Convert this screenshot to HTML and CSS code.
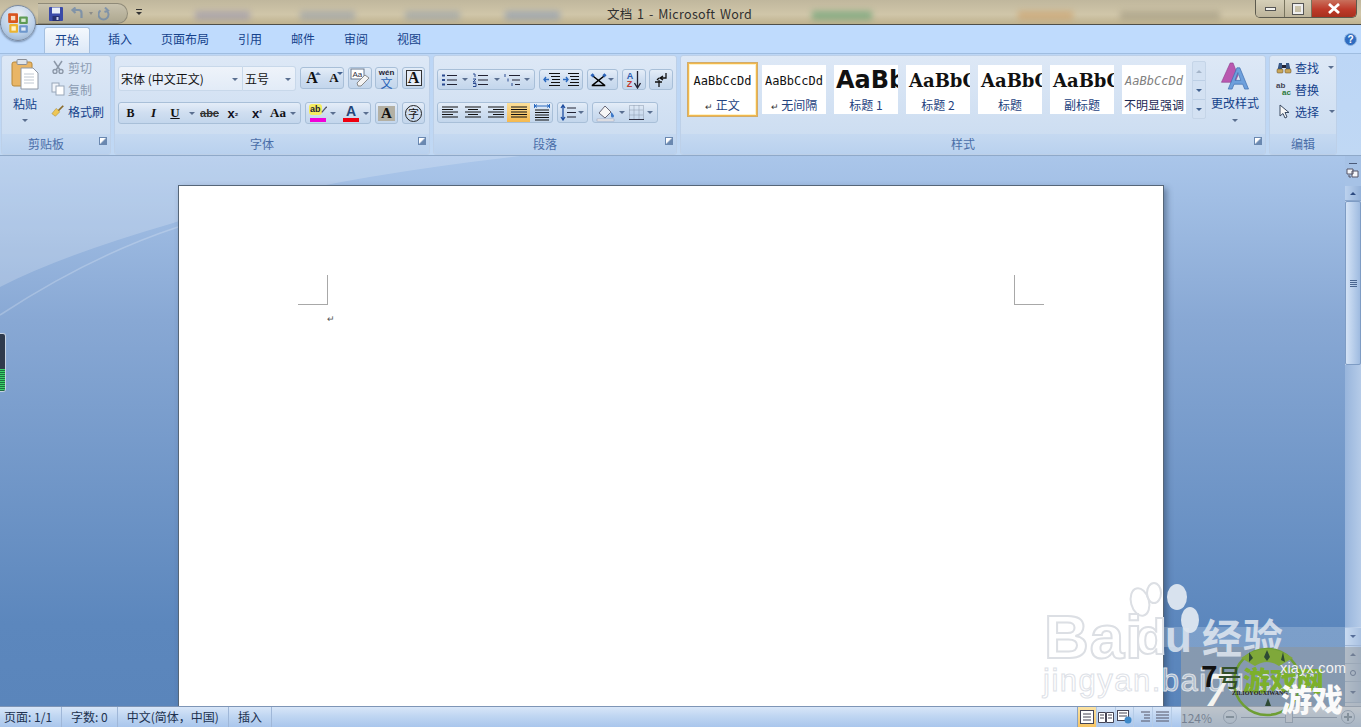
FILE: index.html
```html
<!DOCTYPE html>
<html lang="zh-CN">
<head>
<meta charset="utf-8">
<title>文档 1 - Microsoft Word</title>
<link rel="stylesheet" href="styles.css">
</head>
<body>
<div class="app">
  <header class="titlebar">
    <div class="blurs">
      <i class="blob b1"></i><i class="blob b2"></i><i class="blob b3"></i><i class="blob b4"></i><i class="blob b5"></i><i class="blob b6"></i><i class="blob b7"></i>
    </div>
    <div class="qat">
      <svg width="16" height="16" viewBox="0 0 16 16"><rect x="1" y="1" width="14" height="14" rx="1" fill="#3a4aa8"/><rect x="4" y="1.5" width="8" height="6" fill="#e8eef8"/><rect x="4.5" y="10" width="7" height="5" fill="#27306e"/><rect x="8.5" y="11" width="2" height="3" fill="#c8d0ea"/></svg>
      <svg class="dim" width="14" height="14" viewBox="0 0 14 14"><path d="M11.5 11V6a3 3 0 0 0-3-3H3M5.500 .5 2.500 3l3 3" fill="none" stroke="#6d88aa" stroke-width="2.200"/></svg>
      <span class="qat-arrow"></span>
      <svg class="dim" width="14" height="14" viewBox="0 0 14 14"><path d="M2.500 3.500a5 5 0 1 0 6 0M7 .5 10 3.500 6.500 5" fill="none" stroke="#6d88aa" stroke-width="2"/></svg>
    </div>
    <span class="qat-more"></span>
    <div class="title">文档 1 - Microsoft Word</div>
    <div class="winctl">
      <span class="wc wc-min"><i></i></span>
      <span class="wc wc-max"><i></i></span>
      <span class="wc wc-close">
        <svg width="14" height="11" viewBox="0 0 14 11"><path d="M2 1 12 10M12 1 2 10" stroke="#fff" stroke-width="2.800"/></svg>
      </span>
    </div>
  </header>

  <div class="office-btn">
    <svg width="22" height="24" viewBox="0 0 20 22">
      <rect x="1" y="2" width="9" height="9" rx="1" fill="#d9541e"/><rect x="3.500" y="4.500" width="4" height="4" fill="#f8dcc4"/>
      <rect x="11" y="5" width="8" height="7" rx="1" fill="#5f9b54"/><rect x="13" y="7" width="4" height="3" fill="#dcecd6"/>
      <rect x="2" y="12" width="8" height="8" rx="1" fill="#ecb430"/><rect x="4" y="14" width="4" height="4" fill="#fff3c8"/>
      <rect x="11" y="13" width="8" height="7" rx="1" fill="#6e97cc"/><rect x="13" y="15" width="4" height="3" fill="#e0ebf8"/>
    </svg>
  </div>

  <nav class="tabs">
    <span class="tab active">开始</span>
    <span class="tab first">插入</span>
    <span class="tab">页面布局</span>
    <span class="tab">引用</span>
    <span class="tab">邮件</span>
    <span class="tab">审阅</span>
    <span class="tab">视图</span>
    <span class="help">?</span>
  </nav>

  <section class="ribbon">
    <div class="group g-clip">
      <div class="body clip-body">
        <div class="paste">
          <svg width="28" height="31" viewBox="0 0 28 31">
            <rect x="1" y="3" width="20" height="24" rx="2" fill="#e9b565" stroke="#b88838"/>
            <rect x="6" y="0.500" width="10" height="5" rx="1" fill="#dfe4ea" stroke="#8a8f98"/>
            <path d="M10 9h12l5 5v16H10z" fill="#fff" stroke="#8f98a6"/>
            <path d="M13 15h10M13 18h10M13 21h10M13 24h10" stroke="#c0c8d2"/>
          </svg>
          <span class="paste-label">粘贴</span>
          <span class="caret paste-caret"></span>
        </div>
        <div class="clip-list">
          <div class="clip-row off">
            <svg width="14" height="14" viewBox="0 0 14 14"><path d="M3 1 9 10M11 1 5 10" stroke="#8c98a8" stroke-width="1.500"/><circle cx="4" cy="11.500" r="2" fill="none" stroke="#8c98a8" stroke-width="1.400"/><circle cx="10" cy="11.500" r="2" fill="none" stroke="#8c98a8" stroke-width="1.400"/></svg>
            <span>剪切</span>
          </div>
          <div class="clip-row off">
            <svg width="14" height="14" viewBox="0 0 14 14"><rect x="1" y="1" width="7" height="9" fill="#f0f4fa" stroke="#98a6b8"/><rect x="5" y="4" width="8" height="9" fill="#fff" stroke="#98a6b8"/></svg>
            <span>复制</span>
          </div>
          <div class="clip-row">
            <svg width="16" height="14" viewBox="0 0 16 14"><path d="M8 7 14 1" stroke="#8a6a2a" stroke-width="2"/><path d="M1 10 6 4l4 4-5 5z" fill="#eec655" stroke="#a88a30" stroke-width=".6"/></svg>
            <span>格式刷</span>
          </div>
        </div>
      </div>
      <div class="label pad">剪贴板<span class="launch"></span></div>
    </div>

    <div class="group g-font">
      <div class="body font-body">
        <div class="row font-row1">
          <span class="combo combo-font">宋体 (中文正文)<i class="caret"></i></span>
          <span class="combo combo-size">五号<i class="caret"></i></span>
          <span class="tb tb-grow">
            <b class="btn w22 serif big">A<i class="tri up"></i></b><b class="btn w22 serif mid">A<i class="tri down"></i></b>
          </span>
          <span class="tb single w24">
            <svg width="22" height="20" viewBox="0 0 22 20"><rect x="2" y="1" width="13" height="10" fill="#fff" stroke="#6a7a90"/><text x="3.500" y="9" font-size="8" font-family="Liberation Sans" fill="#334">Aa</text><path d="m8 15 8-8 4 3-8 8H9z" fill="#f4f4f4" stroke="#8a8a8a"/></svg>
          </span>
          <span class="tb single w23 wen"><em>wén</em><strong>文</strong></span>
          <span class="tb single w23 a-box"><b class="serif">A</b></span>
        </div>
        <div class="row font-row2">
          <span class="tb tb-format">
            <b class="btn w23 serif">B</b><i class="btn w23 serif it">I</i><b class="btn w20 serif un">U</b><span class="tcaret w13"></span><span class="btn w23 strike">abc</span><b class="btn w24 sub">x<small>₂</small></b><b class="btn w24 sub">x<small>²</small></b><b class="btn w18 serif aa">Aa</b><span class="tcaret w11"></span>
          </span>
          <span class="tb tb-colors">
            <span class="swatch"><em class="hl">ab</em><svg class="pen" width="8" height="9" viewBox="0 0 8 9"><path d="M1 8 7 1" stroke="#556" stroke-width="1.600"/></svg><i class="bar magenta"></i></span><span class="tcaret w12"></span>
            <span class="swatch s2"><b class="fc">A</b><i class="bar red"></i></span><span class="tcaret w12"></span>
          </span>
          <span class="tb single w23 shade"><b class="serif">A</b></span>
          <span class="tb single w23"><span class="zi">字</span></span>
        </div>
      </div>
      <div class="label pad">字体<span class="launch"></span></div>
    </div>

    <div class="group g-para">
      <div class="body para-body">
        <div class="row para-row1">
          <span class="tb w98 spread">
            <svg width="17" height="14" viewBox="0 0 17 14"><path d="M6 2.500h10M6 7h10M6 11.500h10" stroke="#223"/><path d="M1 2.500h3M1 7h3M1 11.500h3" stroke="#2b4a90" stroke-width="2"/></svg><span class="tcaret w10"></span>
            <svg width="17" height="14" viewBox="0 0 17 14"><path d="M6 2.500h10M6 7h10M6 11.500h10" stroke="#223"/><path d="M1 1h2v3M1 6h3l-3 3h3M1 10.500h3v3H1" fill="none" stroke="#2b4a90"/></svg><span class="tcaret w10"></span>
            <svg width="17" height="14" viewBox="0 0 17 14"><path d="M5 2.500h11M8 7h8M11 11.500h5" stroke="#223"/><path d="M1 1v3M4 5.500v3M8 10v3" stroke="#2b4a90"/></svg><span class="tcaret w8"></span>
          </span>
          <span class="tb w44 spread">
            <svg width="18" height="15" viewBox="0 0 18 15"><path d="M6 1.500h11M8 4.500h9M9 7.500h8M8 10.500h9M6 13.500h11" stroke="#111" stroke-width="1.200"/><path d="M6 7.500H1M3 5 1 7.500 3 10" fill="none" stroke="#2b6ac0" stroke-width="1.400"/></svg>
            <svg width="18" height="15" viewBox="0 0 18 15"><path d="M6 1.500h11M8 4.500h9M9 7.500h8M8 10.500h9M6 13.500h11" stroke="#111" stroke-width="1.200"/><path d="M1 7.500h5M4 5l2 2.500L4 10" fill="none" stroke="#2b6ac0" stroke-width="1.400"/></svg>
          </span>
          <span class="tb w31 spread">
            <svg width="20" height="16" viewBox="0 0 20 16"><path d="M3 3 17 14M17 3 3 14M2 14.500h16" fill="none" stroke="#000" stroke-width="1.700"/><path d="M3 0 5.500 2.500 3 5 .5 2.500zM17 0l2.500 2.500L17 5l-2.500-2.500z" fill="#2a62b8"/></svg><span class="tcaret w8"></span>
          </span>
          <span class="tb w24 az"><span class="az-l"><b class="az-a">A</b><b class="az-z">Z</b></span><svg width="7" height="18" viewBox="0 0 7 18"><path d="M3.500 0v16M.5 12l3 5 3-5" fill="none" stroke="#223" stroke-width="1.300"/></svg></span>
          <span class="tb w24 single">
            <svg width="14" height="16" viewBox="0 0 14 16"><path d="M12 1v5H7M9 4 6 6l3 2M1 10h7M5 8v7M3 8l2-2" fill="none" stroke="#111" stroke-width="1.300"/></svg>
          </span>
        </div>
        <div class="row para-row2">
          <span class="tb w116 aligns">
            <span class="btn w23"><svg width="16" height="13" viewBox="0 0 16 13"><path d="M0 1h16M0 3.500h11M0 6h16M0 8.500h11M0 11h16" stroke="#111"/></svg></span><span class="btn w23"><svg width="16" height="13" viewBox="0 0 16 13"><path d="M0 1h16M3 3.500h10M0 6h16M3 8.500h10M0 11h16" stroke="#111"/></svg></span><span class="btn w23"><svg width="16" height="13" viewBox="0 0 16 13"><path d="M0 1h16M5 3.500h11M0 6h16M5 8.500h11M0 11h16" stroke="#111"/></svg></span><span class="btn w23 on"><svg width="16" height="13" viewBox="0 0 16 13"><path d="M0 1h16M0 3.500h16M0 6h16M0 8.500h16M0 11h16" stroke="#111"/></svg></span><span class="btn w24"><svg width="16" height="17" viewBox="0 0 16 17"><path d="M1 6h14M1 8.500h14M1 11h14M1 13.500h14M1 16h14" stroke="#111"/><path d="M.5 0v4M15.500 0v4M1 2h14M3 .5 1 2l2 1.500M13 .5 15 2l-2 1.500" fill="none" stroke="#2b6ac0"/></svg></span>
          </span>
          <span class="tb w31 spread">
            <svg width="16" height="17" viewBox="0 0 16 17"><path d="M7 4h9M7 8.500h9M7 13h9" stroke="#223"/><path d="M3 1v15M1 4l2-3 2 3M1 13l2 3 2-3" fill="none" stroke="#1f4ea0" stroke-width="1.300"/></svg><span class="tcaret w8"></span>
          </span>
          <span class="tb w66 spread">
            <svg width="20" height="18" viewBox="0 0 20 18"><path d="m3 9 6-7 6 6-6 6z" fill="#f6f6f6" stroke="#667"/><path d="M15 8c2 2 3 3 3 4a1.500 1.500 0 0 1-3 0z" fill="#3d78c8"/><rect x="1" y="15" width="17" height="2" fill="#f4f4f4" stroke="#99a" stroke-width=".5"/></svg><span class="tcaret w8"></span>
            <svg width="15" height="15" viewBox="0 0 15 15"><path d="M.5.5h14v14H.5zM5 .5v14M10 .5v14M.5 5h14M.5 10h14" fill="none" stroke="#8a98ac" stroke-dasharray="1 1"/><path d="M0 14.500h15" stroke="#334"/></svg><span class="tcaret w8"></span>
          </span>
        </div>
      </div>
      <div class="label pad">段落<span class="launch"></span></div>
    </div>

    <div class="group g-styles">
      <div class="body styles-body">
        <div class="gallery">
          <div class="card sel"><span class="sample mono">AaBbCcDd</span><span class="cap"><i class="ret">↵</i> 正文</span></div>
          <div class="card"><span class="sample mono">AaBbCcDd</span><span class="cap"><i class="ret">↵</i> 无间隔</span></div>
          <div class="card"><span class="sample h1">AaBb</span><span class="cap">标题 1</span></div>
          <div class="card"><span class="sample h2">AaBbC</span><span class="cap">标题 2</span></div>
          <div class="card"><span class="sample h2">AaBbC</span><span class="cap">标题</span></div>
          <div class="card"><span class="sample h2">AaBbC</span><span class="cap">副标题</span></div>
          <div class="card"><span class="sample em">AaBbCcDd</span><span class="cap dark">不明显强调</span></div>
        </div>
        <div class="gal-scroll">
          <span class="gs"><i class="tri up gray"></i></span>
          <span class="gs"><i class="tri down blue"></i></span>
          <span class="gs gs-more"><i class="tri down blue"></i></span>
        </div>
        <div class="change">
          <svg width="30" height="29" viewBox="0 0 30 30">
            <path d="M1 21 10 1h3l5 13-3 7z" fill="#b958b0" stroke="#8a3a88" stroke-width=".6"/>
            <path d="M8 28 17 6h3l9 22h-4l-2-5h-9l-2 5zM15 19h6l-3-8z" fill="#6ea0dc" stroke="#3d6cae" stroke-width=".7"/>
          </svg>
          <span>更改样式</span>
          <i class="caret"></i>
        </div>
      </div>
      <div class="label pad">样式<span class="launch"></span></div>
    </div>

    <div class="group g-edit">
      <div class="body edit-body">
        <div class="edit-row">
          <svg width="16" height="14" viewBox="0 0 16 14"><path d="M1 12 3 3h3v9zM10 12V3h3l2 9z" fill="#3a5a88"/><rect x="1" y="9" width="6" height="4" rx="1" fill="#c9a75a" stroke="#604a20" stroke-width=".5"/><rect x="9" y="9" width="6" height="4" rx="1" fill="#c9a75a" stroke="#604a20" stroke-width=".5"/><rect x="6" y="5" width="4" height="3" fill="#223"/></svg>
          <span>查找</span><i class="caret"></i>
        </div>
        <div class="edit-row">
          <span class="abac"><em>ab</em><em class="ac">ac</em></span>
          <span>替换</span>
        </div>
        <div class="edit-row row3">
          <svg width="12" height="15" viewBox="0 0 12 15"><path d="M1 1v11l3-2.500 2 4.500 2-1-2-4.500h4z" fill="#f8f8f8" stroke="#3a4a60"/></svg>
          <span>选择</span><i class="caret"></i>
        </div>
      </div>
      <div class="label">编辑</div>
    </div>
  </section>

  <main class="workspace">
    <svg class="swoosh" width="1345" height="550" viewBox="0 0 1345 550" preserveAspectRatio="none">
      <path d="M0 0H520Q300 25 170 68 60 100 0 131z" fill="#fff" fill-opacity=".2"/>
      <path d="M0 159Q90 100 178 71" fill="none" stroke="#fff" stroke-opacity=".22" stroke-width="1.500"/>
    </svg>
    <div class="canvas">
      <div class="page">
        <div class="margins">
          <span class="corner left"></span>
          <span class="corner right"></span>
        </div>
        <div class="para-mark">↵</div>
      </div>
    </div>
    <aside class="vscroll">
      <span class="ruler-ico">
        <svg width="13" height="17" viewBox="0 0 13 17"><path d="M3 .5h8" stroke="#4a5a78"/><path d="M1 6h6v5H1zM6 8h6v6H6z" fill="#f4f6fa" stroke="#556"/><path d="M3 12v2h2" fill="none" stroke="#556"/></svg>
      </span>
      <span class="sb-btn"><i class="tri up navy"></i></span>
      <span class="thumb"><i class="grip"></i></span>
      <span class="sb-track"></span>
      <span class="sb-btn small"><i class="tri down navy"></i></span>
      <span class="sb-btn small"><i class="tri up navy"></i></span>
      <span class="sb-btn small"><i class="dot"></i></span>
      <span class="sb-btn small last"><i class="tri down navy"></i></span>
    </aside>
  </main>

  <footer class="status">
    <span class="st">页面: 1/1</span>
    <span class="st">字数: 0</span>
    <span class="st">中文(简体，中国)</span>
    <span class="st">插入</span>
    <span class="st-fill"></span>
    <div class="views">
      <span class="vw on"><svg width="14" height="14" viewBox="0 0 14 14"><rect x=".5" y=".5" width="13" height="13" fill="#fff" stroke="#445"/><path d="M3 4h8M3 7h8M3 10h8" stroke="#445"/></svg></span>
      <span class="vw"><svg width="16" height="13" viewBox="0 0 16 13"><path d="M.5 1.500h7v10h-7zM8.500 1.500h7v10h-7z" fill="#fff" stroke="#445"/><path d="M2 4h4M2 7h4M10 4h4M10 7h4" stroke="#445"/></svg></span>
      <span class="vw"><svg width="15" height="14" viewBox="0 0 15 14"><rect x=".5" y=".5" width="11" height="10" fill="#fff" stroke="#445"/><path d="M2 3h8M2 6h8" stroke="#445"/><circle cx="11" cy="10" r="3.500" fill="#3d88c8"/></svg></span>
      <span class="vw"><svg width="13" height="12" viewBox="0 0 13 12"><path d="M4 1h9M7 4h6M7 7h6M4 10h9" stroke="#556"/></svg></span>
      <span class="vw"><svg width="13" height="12" viewBox="0 0 13 12"><path d="M0 1h13M0 4h13M0 7h13M0 10h13" stroke="#556"/></svg></span>
    </div>
    <span class="zoomval">124%</span>
    <span class="zm"><i></i></span>
    <span class="zoomline"><i></i></span>
    <span class="zm plus"><i></i></span>
  </footer>

  <div class="left-gadget"><i></i></div>

  <div class="watermark">
    <span class="wm-lite"></span>
    <span class="wm-dark"></span>
    <svg class="paw" width="100" height="80" viewBox="0 0 100 80">
      <ellipse cx="14" cy="20" rx="9" ry="14" fill="none" stroke="#dcdfe4" stroke-width="2" transform="rotate(-15 14 20)"/>
      <ellipse cx="28" cy="11" rx="7" ry="10" fill="none" stroke="#dcdfe4" stroke-width="2"/>
      <ellipse cx="51" cy="15" rx="10" ry="13" fill="#d8e2ee"/>
      <ellipse cx="64" cy="38" rx="9" ry="13" fill="#d8e2ee"/>
    </svg>
    <span class="wm-bai">Bai</span>
    <span class="wm-d">d</span>
    <span class="wm-u">u</span>
    <span class="wm-jy">经验</span>
    <span class="wm-url">jingyan.baidu.com</span>
    <svg class="ring" width="76" height="76" viewBox="0 0 76 76"><circle cx="38" cy="38" r="33" fill="none" stroke="#6e9e34" stroke-width="2.500"/><path d="M12 14Q38-4 64 14L50 22Q38 14 26 22z" fill="#7fa83a"/><path d="M20 8l4 6-4 4zM38 6l3 7-3 4-3-4zM54 8l-2 8 4 2z" fill="#2e4a34"/><path d="M36 62l3-8 3 8z" fill="#2e4a34"/></svg>
    <span class="wm-green">游戏网</span>
    <span class="wm-7w">7</span>
    <span class="wm-7"><b>7</b>号</span>
    <span class="wm-xiayx">xiayx.com</span>
    <span class="wm-pin">ZILIOYOUXIWANG</span>
    <span class="wm-youxi">游戏</span>
  </div>
</div>
</body>
</html>
```
FILE: styles.css
```css
* { box-sizing: border-box; }
html, body { margin: 0; padding: 0; height: 100%; overflow: hidden; }
body { font-family: "Noto Sans CJK SC", "Liberation Sans", sans-serif; font-size: 12px; color: #15428b; }
i, em { font-style: normal; }

.app { position: relative; width: 1361px; height: 727px; display: flex; flex-direction: column; overflow: hidden; }

/* title bar */
.titlebar { position: relative; height: 25px; flex: none; display: flex; align-items: flex-start; overflow: hidden;
  background: linear-gradient(#c0b79d, #d0c6a9 60%, #bfb28f); border-bottom: 1px solid #4e4e48; padding-left: 38px; }
.blurs { position: absolute; inset: 0; filter: blur(3px); opacity: .55; }
.blob { position: absolute; top: 11px; height: 9px; }
.b1 { left: 195px; width: 55px; background: #8f8cac; }
.b2 { left: 300px; width: 55px; background: #8e98a8; }
.b3 { left: 405px; width: 55px; background: #8e9aa8; }
.b4 { left: 505px; width: 55px; background: #7e92b4; }
.b5 { left: 812px; width: 60px; background: #4f9868; }
.b6 { left: 1018px; width: 55px; background: #cc9a60; }
.b7 { left: 1120px; width: 100px; background: #99927a; }
.qat { position: relative; width: 90px; height: 21px; margin-top: 3px; border: 1px solid #8f8a78; border-left: 0; border-radius: 0 11px 11px 0;
  background: linear-gradient(#c8c2ae, #ada78f); display: flex; align-items: center; gap: 6px; padding-left: 10px; }
.dim { opacity: .75; }
.qat-arrow { width: 0; height: 0; border: 2px solid transparent; border-top: 3px solid #8c8c88; margin: 2px -1px 0 -1px; }
.qat-more { position: relative; width: 6px; height: 5px; margin: 9px 0 0 8px; border-top: 1px solid #333; }
.qat-more::after { content: ""; position: absolute; left: 0; top: 2px; border: 3px solid transparent; border-top: 3px solid #333; }
.title { position: absolute; left: -2px; right: 0; top: 5px; text-align: center; font-size: 12.5px; line-height: 17px; color: #2f2f2f; letter-spacing: .3px; word-spacing: 1.500px; font-family: "Noto Sans CJK SC", "Noto Sans", sans-serif; }
.winctl { position: absolute; right: 4px; top: 0; height: 18px; width: 102px; display: flex; border: 1px solid #5c5a4e; border-top: 0; border-radius: 0 0 5px 5px; overflow: hidden; }
.wc { display: flex; align-items: center; justify-content: center; height: 100%; background: linear-gradient(#d5cfb8, #bdb49b); border-right: 1px solid #78745f; }
.wc-min { width: 29px; } .wc-max { width: 27px; }
.wc-min i { width: 11px; height: 4px; background: #f2f2ee; border: 1px solid #555; }
.wc-max i { width: 10px; height: 10px; border: 2px solid #eee; outline: 1px solid #555; background: transparent; }
.wc-close { flex: 1; border: 0; background: linear-gradient(#c9705c, #be3a2a 55%, #a8301f); }

.office-btn { position: absolute; left: 0; top: 5px; width: 36px; height: 36px; border-radius: 50%; z-index: 4; display: flex; align-items: center; justify-content: center;
  background: radial-gradient(circle at 50% 30%, #eef0f2, #b8cee8 62%, #8aa4c2); border: 1px solid #7a8aa0; box-shadow: 0 1px 2px rgba(40,60,90,.5); }

/* tabs */
.tabs { position: relative; height: 28px; flex: none; display: flex; align-items: flex-end; padding-left: 44px; background: #bfdbfd; }
.tab { height: 26px; line-height: 23px; padding: 0 14.500px; color: #15428b; font-size: 12px; }
.tab.first { margin-left: 3.500px; }
.tab.active { width: 46px; padding: 0; text-align: center; background: linear-gradient(#f4f8fd, #dce8f7); border: 1px solid #a5c0e0; border-bottom: 0; border-radius: 3px 3px 0 0; }
.help { position: absolute; right: 4px; top: 8px; width: 13px; height: 13px; border-radius: 50%; background: #2f6cc0; border: 1px solid #8fb3de; color: #fff; font: bold 10px/11px "Liberation Sans", sans-serif; text-align: center; }

/* ribbon */
.ribbon { height: 103px; flex: none; display: flex; padding: 2px 0 0 1px; background: linear-gradient(#bcd6f6, #c0d8f4); border-top: 1px solid #9fbde0; border-bottom: 1px solid #8fa9c9; }
.group { flex: none; display: flex; flex-direction: column; height: 100px; margin-top: -1px; border: 1px solid #bdd0e8; border-radius: 3px; background: linear-gradient(#dde8f6, #c9dbf0); overflow: hidden; }
.g-clip { width: 110px; margin-right: 3px; }
.g-font { width: 316px; margin-right: 3px; }
.g-para { width: 244px; margin-right: 3px; }
.g-styles { width: 586px; margin-right: 3px; }
.g-edit { width: 68px; }
.body { flex: 1; min-height: 0; position: relative; }
.label { position: relative; height: 20px; flex: none; text-align: center; line-height: 20px; color: #4a6ea8; background: linear-gradient(#c5d9f1, #b9d1ee); font-size: 12px; }
.label.pad { padding-right: 20px; }
.launch { position: absolute; right: 3px; top: 3px; width: 8px; height: 8px; border: 1px solid #6a88b0; background: linear-gradient(135deg, #fff 40%, #6a88b0 60%); }
.caret { display: inline-block; width: 0; height: 0; border: 3px solid transparent; border-top: 3px solid #5a6f90; border-bottom: 0; }

/* clipboard */
.clip-body { display: flex; padding: 3px 0 0 9px; }
.paste { width: 28px; display: flex; flex-direction: column; align-items: center; }
.paste-label { margin-top: 5px; color: #15428b; line-height: 18px; }
.paste-caret { margin-top: 6px; }
.clip-list { margin: -2px 0 0 12px; display: flex; flex-direction: column; gap: 2px; }
.clip-row { height: 20px; display: flex; align-items: center; gap: 3px; width: 56px; white-space: nowrap; }
.clip-row svg { flex: none; width: 14px; }
.clip-row.off { color: #8c9cb2; }

/* toolbars */
.row { display: flex; }
.tb { height: 21px; display: inline-flex; align-items: center; border: 1px solid #a8bfd8; border-radius: 3px; background: linear-gradient(#e4edf8, #cfdef0 50%, #c3d6ec); color: #111; flex: none; }
.btn { display: inline-flex; align-items: center; justify-content: center; height: 100%; flex: none; font-weight: inherit; }
.single { justify-content: center; }
.spread { justify-content: space-around; padding: 0 2px; }
.serif { font-family: "Liberation Serif", serif; font-weight: 700; }
.w8 { width: 8px; } .w10 { width: 10px; } .w11 { width: 11px; } .w12 { width: 12px; } .w13 { width: 13px; }
.w18 { width: 18px; } .w20 { width: 20px; } .w22 { width: 22px; } .w23 { width: 23px; } .w24 { width: 24px; }
.w31 { width: 31px; } .w44 { width: 44px; } .w66 { width: 66px; } .w98 { width: 98px; } .w116 { width: 116px; }
.tcaret { display: inline-flex; align-items: center; justify-content: center; height: 100%; flex: none; }
.tcaret::after { content: ""; border: 3px solid transparent; border-top: 3px solid #5a6f90; border-bottom: 0; }
.tri { display: inline-block; width: 0; height: 0; border: 3px solid transparent; }
.tri.up { border-top: 0; border-bottom: 3px solid #41618f; }
.tri.down { border-bottom: 0; border-top: 3px solid #41618f; }

/* font group */
.font-body { padding: 10px 0 0 3px; }
.font-row1 { height: 26px; align-items: flex-start; }
.font-row1 .tb { height: 22px; margin-top: 1px; }
.combo { height: 25px; display: flex; align-items: center; position: relative; color: #111; background: linear-gradient(#eef3fa, #e2ebf7); border: 1px solid #c8d8ea; flex: none; }
.combo-font { width: 125px; padding-left: 2px; border-radius: 3px 0 0 3px; }
.combo-size { width: 53px; padding-left: 2px; border-left: 0; border-radius: 0 3px 3px 0; margin-right: 4px; }
.combo .caret { position: absolute; right: 4px; top: 11px; }
.tb-grow { width: 44px; margin-right: 4px; }
.big { font-size: 16px; line-height: 1; position: relative; }
.mid { font-size: 13px; position: relative; }
.btn .tri { position: absolute; right: 2px; top: 4px; }
.font-row1 .w24 { margin-right: 3px; }
.font-row1 .wen { margin-right: 4px; }
.wen { position: relative; flex-direction: column; line-height: 1; }
.wen em { font: 700 8px/8px "Liberation Sans", sans-serif; color: #223; }
.wen strong { font-size: 12px; line-height: 11px; color: #2a64b8; font-weight: 400; }
.a-box b { font-size: 16px; border: 1px solid #333; width: 16px; height: 16px; line-height: 14px; text-align: center; background: #e6edf7; }
.font-row2 { margin-top: 10px; height: 22px; }
.font-row2 .tb { height: 22px; }
.tb-format { width: 183px; margin-right: 4px; }
.it { font-size: 13px; font-style: italic; }
.un { text-decoration: underline; font-size: 13px; }
.strike { text-decoration: line-through; font: 700 11px "Liberation Sans", sans-serif; color: #333; }
.sub { font: 700 13px "Liberation Sans", sans-serif; color: #112; }
.sub small { font-size: 8px; }
.aa { font-size: 13px; }
.tb-colors { width: 66px; margin-right: 4px; padding-left: 3px; }
.swatch { position: relative; width: 18px; height: 18px; display: flex; flex: none; }
.swatch.s2 { margin-left: 3px; justify-content: center; }
.hl { font: 700 9px/11px "Liberation Sans", sans-serif; background: #f4ec60; padding: 0 1px; height: 11px; color: #223; border-radius: 3px; }
.pen { margin: 1px 0 0 -1px; }
.fc { font: 700 14px/14px "Liberation Sans", sans-serif; color: #24467a; }
.bar { position: absolute; left: 1px; right: 1px; bottom: 0; height: 4px; }
.magenta { background: #f000d8; }
.red { background: #ef0010; }
.font-row2 .shade { margin-right: 4px; }
.shade b { font-size: 15px; padding: 0 3px; background: #b3b0a4; line-height: 15px; }
.zi { width: 17px; height: 17px; border-radius: 50%; border: 1px solid #222; font-size: 11px; line-height: 15px; text-align: center; color: #111; }

/* paragraph */
.para-body { padding: 13px 0 0 3px; }
.para-row1 { gap: 4px; }
.para-row1 .w24 { width: 24px; }
.para-row1 .w24.single { margin-left: -1px; }
.para-row2 { gap: 4px; margin-top: 12px; }
.aligns { overflow: hidden; }
.on { background: linear-gradient(#fbdf9a, #f5b94f); }
.az { justify-content: center; gap: 1px; }
.az-l { display: flex; flex-direction: column; font: 700 9px/8px "Liberation Sans", sans-serif; }
.az-a { color: #2a5cb0; } .az-z { color: #c03a30; }

/* styles */
.styles-body { display: flex; padding: 6px 0 0 3px; }
.gallery { display: flex; padding: 3px 0 0 3px; height: 52px; width: 508px; flex: none; gap: 8px; align-items: flex-start; }
.card { width: 64px; height: 49px; background: #fff; display: flex; flex-direction: column; align-items: center; overflow: hidden; flex: none; }
.card.sel { width: 71px; height: 55px; margin: -3px -4px 0 0; border: 2px solid #f2b74c; box-shadow: inset 0 0 0 1px #fdf2c8; outline: 1px solid #d1ac6a; outline-offset: -1px; padding-top: 1px; }
.sample { height: 30px; line-height: 32px; width: 100%; text-align: center; white-space: nowrap; color: #111; overflow: hidden; flex: none; }
.mono { font: 12px/32px "DejaVu Sans Mono", monospace; }
.h1 { font: 700 24px/30px "DejaVu Sans", sans-serif; text-align: left; padding-left: 2px; }
.h2 { font: 700 18px/32px "DejaVu Serif", serif; text-align: left; padding-left: 3px; }
.em { font: italic 12px/32px "DejaVu Sans Mono", monospace; color: #808080; }
.cap { line-height: 20px; color: #24427e; font-size: 12px; white-space: nowrap; flex: none; }
.cap.dark { color: #1d2a54; }
.ret { font-size: 9px; color: #333; }
.gal-scroll { width: 14px; height: 58px; display: flex; flex-direction: column; flex: none; border: 1px solid #c5d5e8; border-radius: 2px; background: #d3e1f2; position: relative; top: -1px; }
.gs { flex: 1; display: flex; align-items: center; justify-content: center; border-bottom: 1px solid #bccfe5; }
.gs-more { border-bottom: 0; }
.gray.up { border-bottom-color: #a5b5c9; }
.change { width: 54px; margin-left: 2px; display: flex; flex-direction: column; align-items: center; }
.change span { color: #15428b; line-height: 18px; margin-top: 3px; white-space: nowrap; }
.change .caret { margin-top: 7px; }

/* edit */
.edit-body { padding: 1px 0 0 6px; display: flex; flex-direction: column; gap: 2px; }
.edit-row { height: 20px; display: flex; align-items: center; gap: 3px; white-space: nowrap; }
.edit-row svg { flex: none; }
.edit-row .caret { margin-left: 6px; }
.row3 { padding-left: 3px; gap: 4px; }
.abac { width: 16px; font: 700 8px/7px "Liberation Sans", sans-serif; display: flex; flex-direction: column; color: #445; }
.abac .ac { color: #2c7a3a; padding-left: 6px; }

/* workspace */
.workspace { position: relative; flex: 1; min-height: 0; display: flex; overflow: hidden; background: linear-gradient(#aac6ea, #88a8d4 30%, #5c87bd 85%, #5a85bb); }
.swoosh { position: absolute; left: 0; top: 0; }
.canvas { position: relative; flex: 1; padding: 29px 0 0 178px; overflow: hidden; }
.page { position: relative; width: 986px; height: 540px; background: #fff; border: 1px solid #566678; box-shadow: 3px 3px 6px rgba(35,55,85,.45); }
.margins { display: flex; justify-content: space-between; padding: 89px 119px 0 119px; }
.corner { width: 30px; height: 30px; border-bottom: 1px solid #a8a8a8; }
.corner.left { border-right: 1px solid #a8a8a8; }
.corner.right { border-left: 1px solid #a8a8a8; }
.para-mark { font-size: 9px; line-height: 12px; color: #555; padding-left: 148px; margin-top: 8px; }
.vscroll { position: relative; width: 16px; flex: none; display: flex; flex-direction: column; background: linear-gradient(90deg, #c3d4ec, #b0c6e4); }
.ruler-ico { height: 30px; flex: none; padding: 7px 0 0 1px; background: #a6c2e6; }
.sb-btn { height: 15px; flex: none; display: flex; align-items: center; justify-content: center; background: linear-gradient(90deg, #bcd2ee, #94b2da); border-bottom: 1px solid #8aa6cc; }
.sb-btn.small { height: 18px; }
.sb-btn.last { margin-bottom: 3px; height: 21px; }
.navy.up { border-bottom-color: #2c4a80; }
.navy.down { border-top-color: #2c4a80; }
.thumb { height: 164px; flex: none; display: flex; align-items: center; justify-content: center; background: linear-gradient(90deg, #d4e3f6, #9fbbe0); border: 1px solid #7e9cc4; border-radius: 2px; }
.grip { width: 7px; height: 7px; background: repeating-linear-gradient(#4a6690 0 1px, transparent 1px 2px); }
.sb-track { flex: 1; background: linear-gradient(90deg, #98b5dc, #b5cbe8); }
.dot { width: 6px; height: 6px; border-radius: 50%; border: 1px solid #2c4a80; }

/* status */
.status { position: relative; height: 21px; flex: none; display: flex; align-items: center; border-top: 1px solid #7e95b6; background: linear-gradient(#d8e6f8, #c0d6f2 45%, #a9c6ec); color: #20314f; font-size: 12px; }
.st { height: 100%; line-height: 19px; padding: 0 9px; border-right: 1px solid #9fb7d8; white-space: nowrap; }
.st:first-child { padding-left: 4px; }
.st-fill { flex: 1; }
.views { display: flex; height: 100%; width: 95px; flex: none; margin-right: 9px; border-left: 1px solid #8aa2c4; }
.vw { flex: 1; display: flex; align-items: center; justify-content: center; border-right: 1px solid #b5cbe6; }
.vw.on { background: linear-gradient(#fbe3a4, #f6c463); }
.zoomval { width: 42px; flex: none; color: #37517a; font-size: 12px; }
.zm { position: relative; width: 14px; height: 14px; flex: none; border-radius: 50%; border: 1px solid #7590b4; display: flex; align-items: center; justify-content: center; }
.zm i { width: 8px; height: 2px; background: #56718f; }
.zm.plus { margin-right: 6px; }
.zm.plus::after { content: ""; position: absolute; width: 2px; height: 8px; background: #56718f; }
.zoomline { position: relative; flex: 0 0 96px; height: 1px; background: #6a84a8; margin: 0 4px; display: flex; justify-content: center; }
.zoomline i { width: 8px; height: 12px; margin-top: -6px; background: #c5d6ee; border: 1px solid #7590b4; }

.left-gadget { position: absolute; left: 0; top: 333px; width: 6px; height: 59px; border: 1px solid #c6d2e2; border-left: 0; border-radius: 0 3px 3px 0; background: #2f3a4c; overflow: hidden; }
.left-gadget i { display: block; margin-top: 35px; height: 22px; background: repeating-linear-gradient(#39d26a 0 1px, #1e7040 1px 2px); }

/* watermark */
.watermark { position: absolute; inset: 0; pointer-events: none; z-index: 6; overflow: hidden; }
.watermark > * { position: absolute; white-space: nowrap; }
.wm-lite { left: 1163px; top: 627px; width: 198px; height: 20px; background: rgba(255,255,255,.2); }
.wm-dark { left: 1181px; top: 647px; width: 180px; height: 80px; background: rgba(170,170,165,.55); }
.paw { left: 1126px; top: 582px; }
.wm-bai { left: 1044px; top: 604px; font: 700 62px/66px "Liberation Sans", sans-serif; letter-spacing: 1px; color: #fff; -webkit-text-stroke: 2px #dcdfe4; }
.wm-d { left: 1136px; top: 604px; font: 700 50px/66px "Liberation Sans", sans-serif; color: #fff; -webkit-text-stroke: 2px #dcdfe4; }
.wm-u { left: 1165px; top: 612px; font: 700 44px/50px "Liberation Sans", sans-serif; color: rgba(222,230,240,.85); }
.wm-jy { left: 1202px; top: 608px; font: 700 40px/56px "Noto Sans CJK SC", sans-serif; letter-spacing: 1px; color: rgba(225,232,240,.85); }
.wm-url { left: 1043px; top: 662px; font: 400 31px/38px "Liberation Sans", sans-serif; letter-spacing: 1.500px; color: rgba(255,255,255,.4); -webkit-text-stroke: 1px #dde1e7; }
.ring { left: 1229px; top: 644px; }
.wm-green { left: 1243px; top: 662px; font: 900 27px/36px "Noto Sans CJK SC", sans-serif; color: #7cb02c; }
.wm-7w { left: 1205px; top: 664px; font: italic 700 48px/52px "Liberation Serif", serif; color: #f4f4f0; }
.wm-7 { left: 1201px; top: 657px; font: 500 24px/36px "Noto Sans CJK SC", sans-serif; color: #33502a; }
.wm-7 b { color: #111; font-weight: 700; font-size: 28px; }
.wm-xiayx { left: 1280px; top: 658px; font: 400 14.500px/20px "Liberation Sans", sans-serif; letter-spacing: .2px; color: #f2f2f2; }
.wm-pin { left: 1232px; top: 689px; font: 700 6px/8px "Liberation Serif", serif; color: #222; }
.wm-youxi { left: 1281px; top: 677px; font: 900 31px/42px "Noto Sans CJK SC", sans-serif; color: #fafafa; }
```
